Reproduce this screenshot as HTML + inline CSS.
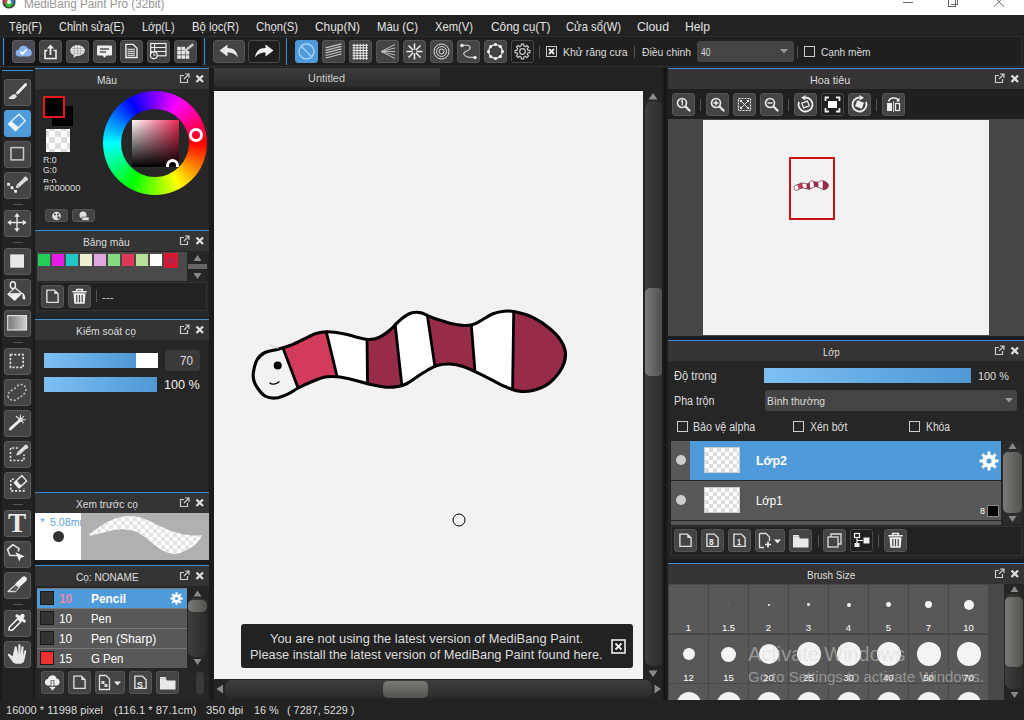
<!DOCTYPE html><html><head><meta charset="utf-8"><title>MediBang Paint Pro</title><style>
*{box-sizing:border-box;margin:0;padding:0}
html,body{width:1024px;height:720px;overflow:hidden;background:#222;font-family:"Liberation Sans",sans-serif;color:#ddd;font-size:12px}
.a{position:absolute}
#root{position:absolute;left:0;top:0;width:1024px;height:720px;overflow:hidden;background:#222}
.t{position:absolute;white-space:pre;line-height:1}
.btn{position:absolute;background:#444;border:1px solid #555;border-radius:3px;width:23px;height:23px}
.btn svg{position:absolute;left:0;top:0}
.tb{position:absolute;background:#454545;border:1px solid #5a5a5a;border-radius:3px;width:27px;height:27px}
.tb svg{position:absolute;left:0;top:0}
.ph{position:absolute;background:#333;border-top:1px solid #3f8fcf;height:21px}
.chk{position:absolute;width:11px;height:11px;border:1px solid #ccc;background:#222}
</style></head><body><div id="root">
<div class="a" style="left:0;top:0;width:1024px;height:15px;background:#fff"></div>
<svg class="a" style="left:2px;top:-5px" width="14" height="14" viewBox="0 0 16 16"><circle cx="8" cy="8" r="7.5" fill="#444"/><circle cx="6" cy="7" r="4" fill="#e33"/><circle cx="10" cy="7" r="4" fill="#3a6fd8"/><circle cx="8" cy="10" r="4" fill="#3b3"/><circle cx="8" cy="8" r="2.2" fill="#fff"/></svg>
<div class="t" style="left:24.00px;top:-2px;font-size:12.5px;color:#969696;transform:scaleX(0.9361);transform-origin:0 0;">MediBang Paint Pro (32bit)</div>
<div class="a" style="left:903px;top:2px;width:10px;height:1px;background:#666"></div>
<div class="a" style="left:948px;top:-6px;width:8px;height:13px;border:1px solid #666"></div><div class="a" style="left:951px;top:-4px;width:7px;height:9px;border-right:1px solid #666;border-bottom:1px solid #666"></div>
<svg class="a" style="left:990px;top:0" width="18" height="10"><path d="M4 -3.300L14 6.700M14 -3.300L4 6.700" stroke="#666" stroke-width="1"/></svg>
<div class="a" style="left:0;top:15px;width:1024px;height:22px;background:#222"></div>
<div class="t" style="left:8.75px;top:20px;font-size:13px;color:#e2e2e2;transform:scaleX(0.8462);transform-origin:0 0;">Tệp(F)</div>
<div class="t" style="left:58.75px;top:20px;font-size:13px;color:#e2e2e2;transform:scaleX(0.8469);transform-origin:0 0;">Chỉnh sửa(E)</div>
<div class="t" style="left:141.75px;top:20px;font-size:13px;color:#e2e2e2;transform:scaleX(0.8360);transform-origin:0 0;">Lớp(L)</div>
<div class="t" style="left:191.75px;top:20px;font-size:13px;color:#e2e2e2;transform:scaleX(0.8674);transform-origin:0 0;">Bộ lọc(R)</div>
<div class="t" style="left:255.50px;top:20px;font-size:13px;color:#e2e2e2;transform:scaleX(0.8674);transform-origin:0 0;">Chọn(S)</div>
<div class="t" style="left:314.50px;top:20px;font-size:13px;color:#e2e2e2;transform:scaleX(0.9160);transform-origin:0 0;">Chụp(N)</div>
<div class="t" style="left:377.00px;top:20px;font-size:13px;color:#e2e2e2;transform:scaleX(0.8732);transform-origin:0 0;">Màu (C)</div>
<div class="t" style="left:435.00px;top:20px;font-size:13px;color:#e2e2e2;transform:scaleX(0.8624);transform-origin:0 0;">Xem(V)</div>
<div class="t" style="left:490.50px;top:20px;font-size:13px;color:#e2e2e2;transform:scaleX(0.9149);transform-origin:0 0;">Công cụ(T)</div>
<div class="t" style="left:566.00px;top:20px;font-size:13px;color:#e2e2e2;transform:scaleX(0.8649);transform-origin:0 0;">Cửa sổ(W)</div>
<div class="t" style="left:637.00px;top:20px;font-size:13px;color:#e2e2e2;transform:scaleX(0.9420);transform-origin:0 0;">Cloud</div>
<div class="t" style="left:685.00px;top:20px;font-size:13px;color:#e2e2e2;transform:scaleX(0.9346);transform-origin:0 0;">Help</div>
<div class="a" style="left:0;top:36px;width:1022px;height:31px;background:#1f1f1f;border-top:1px solid #303030;border-bottom:1px solid #303030;border-right:1px solid #303030"></div>
<div class="a" style="left:2.5px;top:38px;width:1.300px;height:27px;background:#3f8fcf"></div>
<div class="a" style="left:204px;top:38px;width:1.300px;height:27px;background:#3f8fcf"></div>
<div class="a" style="left:286px;top:38px;width:1.300px;height:27px;background:#3f8fcf"></div>
<div class="a" style="left:4.500px;top:37px;width:196px;height:29px;background:#151515"></div>
<div class="btn" style="left:12px;top:40px;width:23px;height:23px;background:#4a4a50;border-color:#5a5a60"><svg width="23" height="23" viewBox="0 0 23 23" style="left:-1px;top:-1px"><path d="M6.5 16.5a3.6 3.6 0 0 1 .4-7.1 4.8 4.8 0 0 1 9.200-.6 3.900 3.900 0 0 1 .6 7.700z" fill="#8ab4f0"/><path d="M8.200 11.600l2.300 2.300 4.200-4.400" stroke="#fff" stroke-width="1.800" fill="none"/></svg></div>
<div class="btn" style="left:39px;top:40px;width:23px;height:23px;"><svg width="23" height="23" viewBox="0 0 23 23" style="left:-1px;top:-1px"><path d="M8.5 10.5H6v8h11v-8h-2.500" stroke="#eee" stroke-width="1.600" fill="none"/><path d="M11.500 15V6.500" stroke="#eee" stroke-width="1.800"/><path d="M7.800 8.600l3.700-4.200 3.700 4.200z" fill="#eee"/></svg></div>
<div class="btn" style="left:66px;top:40px;width:23px;height:23px;"><svg width="23" height="23" viewBox="0 0 23 23" style="left:-1px;top:-1px"><ellipse cx="11.500" cy="10.500" rx="7.300" ry="5.400" fill="#e6e6e6"/><path d="M8 14l-.5 4 4-3z" fill="#e6e6e6"/><path d="M6 8.500h11M5 11h13M6.500 13.500h10M8.500 6v9M11.500 5.500v10M14.500 6v9" stroke="#9a9a9a" stroke-width=".600"/></svg></div>
<div class="btn" style="left:93px;top:40px;width:23px;height:23px;"><svg width="23" height="23" viewBox="0 0 23 23" style="left:-1px;top:-1px"><path d="M5 5.500h13a1 1 0 0 1 1 1v8a1 1 0 0 1-1 1h-4.500l-2 2.200-2-2.200H5a1 1 0 0 1-1-1v-8a1 1 0 0 1 1-1z" fill="#eee"/><path d="M7 9h9M7 12h6" stroke="#555" stroke-width="1.600"/></svg></div>
<div class="btn" style="left:120px;top:40px;width:23px;height:23px;"><svg width="23" height="23" viewBox="0 0 23 23" style="left:-1px;top:-1px"><path d="M5.900 4.400h7.300l3.800 3.800v9.300h-11.100z" fill="none" stroke="#eee" stroke-width="1.400"/><path d="M7.500 9.300h7.500M7.500 11.300h7.500M7.500 13.300h7.500M7.500 15.200h7.500" stroke="#eee" stroke-width="1.100"/></svg></div>
<div class="btn" style="left:147px;top:40px;width:23px;height:23px;"><svg width="23" height="23" viewBox="0 0 23 23" style="left:-1px;top:-1px"><rect x="3.700" y="3.500" width="15.300" height="12.300" fill="none" stroke="#eee" stroke-width="1.200"/><path d="M3.700 7.500h15.300M3.700 11.500h15.300M7.700 3.500v9" stroke="#eee" stroke-width="1"/><circle cx="6.800" cy="15.200" r="3.400" fill="#444" stroke="#eee" stroke-width="1.200"/><path d="M6.800 13.300v2h1.600" stroke="#eee" stroke-width=".900" fill="none"/></svg></div>
<div class="btn" style="left:174px;top:40px;width:23px;height:23px;"><svg width="23" height="23" viewBox="0 0 23 23" style="left:-1px;top:-1px"><path d="M3.200 6.800h3.600v3.600H3.200zM7.400 6.800h3.600v3.600H7.400zM3.200 11h3.600v3.600H3.200zM7.400 11h3.600v3.600H7.400zM11.600 11h3.600v3.600h-3.600zM3.200 15.200h3.600v3.600H3.200zM7.400 15.200h3.600v3.600H7.400zM11.600 15.200h3.600v3.600h-3.600z" fill="#e6e6e6"/><path d="M11.400 10.600L18.500 4.800" stroke="#c8c8c8" stroke-width="2.600" stroke-linecap="round"/></svg></div>
<div class="btn" style="left:213px;top:40px;width:32px;height:23px;"><svg width="32" height="23" viewBox="0 0 32 23" style="left:-1px;top:-1px"><path d="M6.500 10.500l8-6v3.500c6 0 9.500 3 10.500 9.500-2.500-3.500-5.500-5-10.500-5v4z" fill="#e8e8e8"/></svg></div>
<div class="btn" style="left:248px;top:40px;width:32px;height:23px;background:#1f1f1f;border-color:#484848"><svg width="32" height="23" viewBox="0 0 32 23" style="left:-1px;top:-1px"><path d="M25.500 10.500l-8-6v3.500c-6 0-9.500 3-10.500 9.500 2.500-3.500 5.500-5 10.500-5v4z" fill="#f2f2f2"/></svg></div>
<div class="btn" style="left:295px;top:40px;width:23px;height:23px;background:#4f9ad8;border-color:#4f9ad8"><svg width="23" height="23" viewBox="0 0 23 23" style="left:-1px;top:-1px"><circle cx="11.500" cy="11.500" r="7.500" fill="none" stroke="#a8d4f8" stroke-width="1.300"/><path d="M6.200 6.200l10.600 10.600" stroke="#a8d4f8" stroke-width="1.300"/></svg></div>
<div class="btn" style="left:322px;top:40px;width:23px;height:23px;"><svg width="23" height="23" viewBox="0 0 23 23" style="left:-1px;top:-1px"><path d="M3.600 7.900l15.800-4M3.600 10.400l15.800-4M3.600 12.900l15.800-4M3.600 15.500l15.800-4M3.600 18l15.800-4" stroke="#c4c4c4" stroke-width="1.100"/></svg></div>
<div class="btn" style="left:349px;top:40px;width:23px;height:23px;"><svg width="23" height="23" viewBox="0 0 23 23" style="left:-1px;top:-1px"><path d="M3.500 5.300h15.500M3.500 7.900h15.500M3.500 10.500h15.500M3.500 13.100h15.500M3.500 15.700h15.500M3.500 18.300h15.500M5 3.800v16M8.100 3.800v16M11.200 3.800v16M14.300 3.800v16M17.400 3.800v16" stroke="#eee" stroke-width="1"/></svg></div>
<div class="btn" style="left:376px;top:40px;width:23px;height:23px;"><svg width="23" height="23" viewBox="0 0 23 23" style="left:-1px;top:-1px"><path d="M5 11.500L19 4.500M5 11.500L19 8M5 11.500H19M5 11.500L19 15M5 11.500L19 18.500" stroke="#bbb" stroke-width="1"/></svg></div>
<div class="btn" style="left:403px;top:40px;width:23px;height:23px;"><svg width="23" height="23" viewBox="0 0 23 23" style="left:-1px;top:-1px"><path d="M11.500 3.500v16M3.500 11.500h16M5.500 5.500l12 12M17.500 5.500l-12 12" stroke="#eee" stroke-width="1.500"/><circle cx="11.500" cy="11.500" r="2" fill="#444"/></svg></div>
<div class="btn" style="left:430px;top:40px;width:23px;height:23px;"><svg width="23" height="23" viewBox="0 0 23 23" style="left:-1px;top:-1px"><circle cx="11.500" cy="11.500" r="7.500" fill="none" stroke="#ddd" stroke-width="1"/><circle cx="11.500" cy="11.500" r="5" fill="none" stroke="#ddd" stroke-width="1"/><circle cx="11.500" cy="11.500" r="2.500" fill="none" stroke="#ddd" stroke-width="1"/></svg></div>
<div class="btn" style="left:457px;top:40px;width:23px;height:23px;"><svg width="23" height="23" viewBox="0 0 23 23" style="left:-1px;top:-1px"><path d="M5 5.500c5-1 9 0 8 3s-8 3-6 6 5 3 11 3" fill="none" stroke="#ccc" stroke-width="1.200"/><circle cx="5" cy="5.500" r="1.700" fill="#eee"/><circle cx="18" cy="17.500" r="1.700" fill="#eee"/></svg></div>
<div class="btn" style="left:484px;top:40px;width:23px;height:23px;"><svg width="23" height="23" viewBox="0 0 23 23" style="left:-1px;top:-1px"><circle cx="11.500" cy="11.500" r="6.800" fill="none" stroke="#ddd" stroke-width="1.300"/><circle cx="18.5" cy="11.5" r="1.500" fill="#fff"/><circle cx="16.4" cy="16.4" r="1.500" fill="#fff"/><circle cx="11.5" cy="18.5" r="1.500" fill="#fff"/><circle cx="6.6" cy="16.4" r="1.500" fill="#fff"/><circle cx="4.5" cy="11.5" r="1.500" fill="#fff"/><circle cx="6.6" cy="6.6" r="1.500" fill="#fff"/><circle cx="11.5" cy="4.5" r="1.500" fill="#fff"/><circle cx="16.4" cy="6.6" r="1.500" fill="#fff"/></svg></div>
<div class="btn" style="left:511px;top:40px;width:23px;height:23px;background:#1f1f1f;border-color:#484848"><svg width="23" height="23" viewBox="0 0 23 23" style="left:-1px;top:-1px"><polygon points="18.91,10.33 18.91,12.67 16.95,12.81 16.27,14.43 17.57,15.91 15.91,17.57 14.43,16.27 12.81,16.95 12.67,18.91 10.33,18.91 10.19,16.95 8.57,16.27 7.09,17.57 5.43,15.91 6.73,14.43 6.05,12.81 4.09,12.67 4.09,10.33 6.05,10.19 6.73,8.57 5.43,7.09 7.09,5.43 8.57,6.73 10.19,6.05 10.33,4.09 12.67,4.09 12.81,6.05 14.43,6.73 15.91,5.43 17.57,7.09 16.27,8.57 16.95,10.19" fill="none" stroke="#ccc" stroke-width="1.200" stroke-linejoin="round"/><circle cx="11.5" cy="11.5" r="2.8" fill="none" stroke="#ccc" stroke-width="1.200"/></svg></div>
<div class="a" style="left:539px;top:46px;width:1px;height:12px;background:#555"></div>
<div class="a" style="left:634px;top:46px;width:1px;height:12px;background:#555"></div>
<div class="a" style="left:797px;top:46px;width:1px;height:12px;background:#555"></div>
<div class="chk" style="left:546px;top:46px"><svg class="a" style="left:0;top:0" width="9" height="9"><path d="M2 2l5 5M7 2l-5 5" stroke="#eee" stroke-width="1.800"/></svg></div>
<div class="t" style="left:562.50px;top:47px;font-size:11.5px;color:#ddd;transform:scaleX(0.9081);transform-origin:0 0;">Khử răng cưa</div>
<div class="t" style="left:642.00px;top:47px;font-size:11.5px;color:#ddd;transform:scaleX(0.9017);transform-origin:0 0;">Điều chinh</div>
<div class="a" style="left:697px;top:41px;width:97px;height:21px;background:#444;border-radius:3px"></div>
<div class="t" style="left:700.50px;top:48px;font-size:10px;color:#ddd;transform:scaleX(0.8539);transform-origin:0 0;">40</div>
<svg class="a" style="left:780px;top:49px" width="8" height="5"><path d="M0 0h8l-4 4.500z" fill="#999"/></svg>
<div class="chk" style="left:804px;top:46px"></div>
<div class="t" style="left:820.50px;top:47px;font-size:11.5px;color:#ddd;transform:scaleX(0.8800);transform-origin:0 0;">Cạnh mềm</div>
<div class="a" style="left:0;top:68px;width:35px;height:632px;background:#1a1a1a"></div>
<div class="a" style="left:2px;top:70px;width:31px;height:630px;background:#232323;border-top:1px solid #3f8fcf"></div>
<div class="tb" style="left:4px;top:79px;width:27px;height:27px;"><svg width="27" height="27" viewBox="0 0 27 27" style="left:-1px;top:-1px"><path d="M21.700 5.500L13.500 14" stroke="#eee" stroke-width="2.700" stroke-linecap="round"/><path d="M4 19c2.500-.600 3.500-3.600 6.500-4 1.500.400 2.300 1.300 2.300 2.500-1.200 3-5.500 3.600-8.800 1.500z" fill="#e0e0e0"/></svg></div>
<div class="tb" style="left:4px;top:110px;width:27px;height:27px;background:#4f9ad8;border-color:#4f9ad8"><svg width="27" height="27" viewBox="0 0 27 27" style="left:-1px;top:-1px"><path d="M4.400 14L15.100 4.200l6.200 6.600L11.500 20.600z" fill="none" stroke="#d4e8fb" stroke-width="1.600" stroke-linejoin="round"/><path d="M4.400 14l3.100-2.700 7.400 6.300-3.400 3z" fill="#f0f6ff"/></svg></div>
<div class="tb" style="left:4px;top:141px;width:27px;height:27px;"><svg width="27" height="27" viewBox="0 0 27 27" style="left:-1px;top:-1px"><rect x="7" y="6.600" width="12.500" height="12.300" fill="none" stroke="#c8c8c8" stroke-width="1.500"/></svg></div>
<div class="tb" style="left:4px;top:172px;width:27px;height:27px;"><svg width="27" height="27" viewBox="0 0 27 27" style="left:-1px;top:-1px"><path d="M14 14l7.200-6.600" stroke="#ddd" stroke-width="3.600"/><path d="M21.300 6.300l1 1" stroke="#ddd" stroke-width="3.400" stroke-linecap="round"/><path d="M11.700 16.200l1-3.400 2.700 2.600z" fill="#ddd"/><path d="M4.400 12.200l3.600 3.500 3.500 3.600" stroke="#aaa" stroke-width=".800" fill="none"/><rect x="3.100" y="10.900" width="2.700" height="2.700" fill="#eee"/><rect x="6.700" y="14.400" width="2.700" height="2.700" fill="#eee"/><rect x="10.200" y="18" width="2.700" height="2.700" fill="#eee"/></svg></div>
<div class="tb" style="left:4px;top:210px;width:27px;height:27px;"><svg width="27" height="27" viewBox="0 0 27 27" style="left:-1px;top:-1px"><path d="M13 4.500v16M4.500 12.500h17" stroke="#e8e8e8" stroke-width="1.400"/><path d="M13 3l2.800 3.800h-5.600zM13 22l2.800-3.800h-5.600zM3.300 12.500l3.800-2.800v5.600zM22.700 12.500l-3.800-2.800v5.600z" fill="#e8e8e8"/></svg></div>
<div class="tb" style="left:4px;top:248px;width:27px;height:27px;"><svg width="27" height="27" viewBox="0 0 27 27" style="left:-1px;top:-1px"><rect x="6.200" y="6.400" width="13.800" height="13.300" fill="#e8e8e8"/></svg></div>
<div class="tb" style="left:4px;top:279px;width:27px;height:27px;"><svg width="27" height="27" viewBox="0 0 27 27" style="left:-1px;top:-1px"><ellipse cx="8.900" cy="6.200" rx="2.600" ry="3.400" fill="none" stroke="#eee" stroke-width="1.400"/><path d="M3.100 15.200L11.100 8.100l7.500 6.200-7.900 7.600z" fill="#eee"/><path d="M5.500 14.300l5.600-4.800 5.300 4.500z" fill="#555"/><path d="M18.200 13.500c2.200 1.200 3.300 3.600 3 6.800-1.600.700-3-.300-2.600-2.300z" fill="#eee"/></svg></div>
<div class="tb" style="left:4px;top:310px;width:27px;height:27px;"><svg width="27" height="27" viewBox="0 0 27 27" style="left:-1px;top:-1px"><defs><linearGradient id="gg" x1="0" y1="0" x2="1" y2="0"><stop offset="0" stop-color="#777"/><stop offset="1" stop-color="#d0d0d0"/></linearGradient></defs><rect x="3.700" y="5.600" width="18.800" height="14.400" fill="url(#gg)" stroke="#ddd" stroke-width="1.200"/></svg></div>
<div class="tb" style="left:4px;top:348px;width:27px;height:27px;"><svg width="27" height="27" viewBox="0 0 27 27" style="left:-1px;top:-1px"><rect x="6.400" y="6.600" width="12.800" height="12.800" fill="none" stroke="#ddd" stroke-width="1.600" stroke-dasharray="2.200 1.600"/></svg></div>
<div class="tb" style="left:4px;top:379px;width:27px;height:27px;"><svg width="27" height="27" viewBox="0 0 27 27" style="left:-1px;top:-1px"><path d="M4.500 18.500c-2-3 .500-6 4-7.500s5-6 9-5.500 5.500 4.500 3.500 8-4.500 4-7.500 6.500-7 1.500-9-1.500z" fill="none" stroke="#bbb" stroke-width="1.500" stroke-dasharray="2.200 1.700"/></svg></div>
<div class="tb" style="left:4px;top:410px;width:27px;height:27px;"><svg width="27" height="27" viewBox="0 0 27 27" style="left:-1px;top:-1px"><path d="M6.300 19L14.600 11.500" stroke="#eee" stroke-width="3" stroke-linecap="round"/><circle cx="16.400" cy="9.800" r="2.200" fill="#eee"/><path d="M16.400 9.800L12 6.200M16.400 9.800V4.700M16.400 9.800l3.500-3.600M16.400 9.800h5.300M16.400 9.800l3.300 3.400" stroke="#ddd" stroke-width="1.100"/></svg></div>
<div class="tb" style="left:4px;top:441px;width:27px;height:27px;"><svg width="27" height="27" viewBox="0 0 27 27" style="left:-1px;top:-1px"><path d="M14 7H6.500v12.500h13.500v-6" fill="none" stroke="#ddd" stroke-width="1.600" stroke-dasharray="2.200 1.600"/><path d="M14.500 12.500l7-6.500" stroke="#ddd" stroke-width="3.600"/><path d="M21.800 5.200l.800.800" stroke="#ddd" stroke-width="3.400" stroke-linecap="round"/><path d="M12.200 14.600l1-3.300 2.600 2.500z" fill="#ddd"/></svg></div>
<div class="tb" style="left:4px;top:472px;width:27px;height:27px;"><svg width="27" height="27" viewBox="0 0 27 27" style="left:-1px;top:-1px"><path d="M10 7.300H6.800v11.600h13.200v-3" fill="none" stroke="#ddd" stroke-width="1.600" stroke-dasharray="2.200 1.600"/><path d="M10.200 10.700L17.800 3.500l4.800 5.400L15.100 16z" fill="none" stroke="#eee" stroke-width="1.400" stroke-linejoin="round"/><path d="M10.200 10.700l2.300-2.200 5 5.300-2.400 2.200z" fill="#eee"/></svg></div>
<div class="tb" style="left:4px;top:541px;width:27px;height:27px;"><svg width="27" height="27" viewBox="0 0 27 27" style="left:-1px;top:-1px"><path d="M14 14.500l-8.200-.200L3.500 8.500l5.400-4.900 6.200 4-1 3" fill="none" stroke="#ddd" stroke-width="1.700" stroke-linejoin="round"/><path d="M11.500 11.200l9.300 4.200-3.900 1.300-1.600 3.800z" fill="#eee"/></svg></div>
<div class="tb" style="left:4px;top:572px;width:27px;height:27px;"><svg width="27" height="27" viewBox="0 0 27 27" style="left:-1px;top:-1px"><path d="M14.500 12.200L20 7.200" stroke="#eee" stroke-width="5.600" stroke-linecap="round"/><path d="M4 19.500L12.400 12l2.900 3.100-4 4.400z" fill="none" stroke="#ddd" stroke-width="1.300" stroke-linejoin="round"/><path d="M11 13.500l3 3-2.500 2.800h-2z" fill="#666"/></svg></div>
<div class="tb" style="left:4px;top:610px;width:27px;height:27px;"><svg width="27" height="27" viewBox="0 0 27 27" style="left:-1px;top:-1px"><path d="M5 20l.300-2.800 8.800-8.800 3 3-8.800 8.800z" fill="none" stroke="#eee" stroke-width="1.600" stroke-linejoin="round"/><path d="M12.900 5.800l7.500 5.300" stroke="#eee" stroke-width="3" stroke-linecap="round"/><path d="M16 9l2.500-3" stroke="#eee" stroke-width="4.400" stroke-linecap="round"/></svg></div>
<div class="tb" style="left:4px;top:641px;width:27px;height:27px;"><svg width="27" height="27" viewBox="0 0 27 27" style="left:-1px;top:-1px"><path d="M8.500 15.500l-2.800-2.400c-1.200-.900-2.500.300-1.600 1.500l4.700 6.400c.900 1.200 2 1.700 3.500 1.700h4.200c2.200 0 3.500-1.500 3.900-3.600l1.800-8.600c.300-1.300-1.500-1.700-1.900-.400l-1.300 4.300.600-8c.100-1.400-1.900-1.500-2.100-.100l-.900 7.200-.100-9.200c0-1.400-2.100-1.400-2.100 0l-.200 9-1.500-7.200c-.300-1.400-2.300-1-2 .400z" fill="#e8e8e8"/></svg></div>
<div class="tb" style="left:4px;top:510px"></div>
<div class="t" style="left:8.00px;top:510px;font-size:27px;color:#e8e8e8;font-weight:bold;font-family:'Liberation Serif',serif;transform:scaleX(1.0102);transform-origin:0 0;">T</div>
<div class="a" style="left:13px;top:204px;width:10px;height:1px;background:#555"></div>
<div class="a" style="left:13px;top:242px;width:10px;height:1px;background:#555"></div>
<div class="a" style="left:13px;top:342px;width:10px;height:1px;background:#555"></div>
<div class="a" style="left:13px;top:504px;width:10px;height:1px;background:#555"></div>
<div class="a" style="left:13px;top:604px;width:10px;height:1px;background:#555"></div>
<div class="a" style="left:35px;top:68px;width:174px;height:632px;background:#262626"></div>
<div class="a" style="left:209px;top:68px;width:5px;height:632px;background:#1b1b1b"></div>
<div class="ph" style="left:35px;top:68px;width:174px;background:#343434"></div>
<div class="t" style="left:96.50px;top:75px;font-size:11.5px;color:#ddd;transform:scaleX(0.8849);transform-origin:0 0;">Màu</div>
<svg class="a" style="left:178.5px;top:73px" width="11" height="11"><path d="M5 2.500H1.500v7h7V6" fill="none" stroke="#ccc" stroke-width="1.200"/><path d="M5 6l4.500-4.500M6 1h4v4" fill="none" stroke="#ccc" stroke-width="1.200"/></svg>
<svg class="a" style="left:195px;top:73.5px" width="10" height="10"><path d="M1.500 1.500l6.500 6.500M8 1.500l-6.500 6.500" stroke="#ddd" stroke-width="2.300"/></svg>
<div class="a" style="left:52px;top:106px;width:21px;height:20px;background:#000"></div>
<div class="a" style="left:43px;top:96px;width:22px;height:22px;background:#000;border:2px solid #e8191c"></div>
<div class="a" style="left:46px;top:129px;width:24px;height:23px;background:#fff;background-image:conic-gradient(#ddd 25%,#fff 0 50%,#ddd 0 75%,#fff 0);background-size:12px 12px;background-position:3px 2px"></div>
<div class="t" style="left:43.30px;top:155px;font-size:9.5px;color:#ddd;transform:scaleX(0.9259);transform-origin:0 0;">R:0</div>
<div class="t" style="left:43.30px;top:165px;font-size:9.5px;color:#ddd;transform:scaleX(0.8947);transform-origin:0 0;">G:0</div>
<div class="a" style="left:43px;top:177px;width:30px;height:6px;overflow:hidden">
<div class="t" style="left:0.30px;top:0px;font-size:9.5px;color:#ddd;transform:scaleX(0.9604);transform-origin:0 0;">B:0</div>
</div>
<div class="t" style="left:43.50px;top:183px;font-size:9.5px;color:#ddd;transform:scaleX(0.9869);transform-origin:0 0;">#000000</div>
<div class="a" style="left:103px;top:91px;width:104px;height:104px;border-radius:50%;background:conic-gradient(from 90deg,#ff0000,#ff8000 30deg,#ffff00 60deg,#80ff00 90deg,#00ff00 120deg,#00ff80 150deg,#00ffff 180deg,#0080ff 210deg,#0000ff 240deg,#8000ff 270deg,#ff00ff 300deg,#ff0080 330deg,#ff0000)"></div>
<div class="a" style="left:121px;top:109px;width:68px;height:68px;border-radius:50%;background:#262626"></div>
<div class="a" style="left:132px;top:120px;width:47px;height:47px;background:linear-gradient(to bottom,rgba(0,0,0,0),#000),linear-gradient(to right,#fff,#ee2853)"></div>
<div class="a" style="left:188.500px;top:127.500px;width:14px;height:14px;border-radius:50%;border:3px solid #fff"></div>
<div class="a" style="left:166px;top:159px;width:13px;height:8px;overflow:hidden"><div class="a" style="left:0;top:0;width:13px;height:13px;border-radius:50%;border:3px solid #fff;background:#000"></div></div>
<div class="a" style="left:45px;top:209px;width:23px;height:13px;background:#444;border:1px solid #555;border-radius:3px"></div>
<div class="a" style="left:72px;top:209px;width:23px;height:13px;background:#444;border:1px solid #555;border-radius:3px"></div>
<svg class="a" style="left:51px;top:211px" width="11" height="10"><circle cx="5.500" cy="5" r="4.300" fill="#ddd"/><circle cx="4" cy="3.500" r="1" fill="#444"/><circle cx="7" cy="3.500" r="1" fill="#444"/><circle cx="7.500" cy="6.500" r="1.200" fill="#444"/></svg>
<svg class="a" style="left:78px;top:211px" width="12" height="10"><circle cx="5" cy="4" r="3.500" fill="#ddd"/><rect x="4" y="6" width="7" height="3.500" fill="#ddd" stroke="#444" stroke-width=".600"/></svg>
<div class="ph" style="left:35px;top:230px;width:174px;background:#343434"></div>
<div class="t" style="left:83.30px;top:237px;font-size:11.5px;color:#ddd;transform:scaleX(0.8906);transform-origin:0 0;">Bảng màu</div>
<svg class="a" style="left:178.5px;top:235px" width="11" height="11"><path d="M5 2.500H1.500v7h7V6" fill="none" stroke="#ccc" stroke-width="1.200"/><path d="M5 6l4.500-4.500M6 1h4v4" fill="none" stroke="#ccc" stroke-width="1.200"/></svg>
<svg class="a" style="left:195px;top:235.5px" width="10" height="10"><path d="M1.500 1.500l6.500 6.500M8 1.500l-6.500 6.500" stroke="#ddd" stroke-width="2.300"/></svg>
<div class="a" style="left:37px;top:252px;width:150px;height:29px;background:#4a4a4a"></div>
<div class="a" style="left:38px;top:254px;width:12px;height:12px;background:#22cc55"></div>
<div class="a" style="left:52px;top:254px;width:12px;height:12px;background:#e81ce8"></div>
<div class="a" style="left:66px;top:254px;width:12px;height:12px;background:#22c8c8"></div>
<div class="a" style="left:80px;top:254px;width:12px;height:12px;background:#f0f0d0"></div>
<div class="a" style="left:94px;top:254px;width:12px;height:12px;background:#e0a8e0"></div>
<div class="a" style="left:108px;top:254px;width:12px;height:12px;background:#88dc80"></div>
<div class="a" style="left:122px;top:254px;width:12px;height:12px;background:#e03858"></div>
<div class="a" style="left:136px;top:254px;width:12px;height:12px;background:#b8e098"></div>
<div class="a" style="left:150px;top:254px;width:12px;height:12px;background:#ffffff"></div>
<div class="a" style="left:164px;top:254px;width:12px;height:12px;background:#d81830"></div>
<div class="a" style="left:163.500px;top:253px;width:14.500px;height:14.500px;background:#d81830"></div><div class="a" style="left:167.500px;top:257px;width:6.500px;height:6.500px;border-radius:50%;background:#a82848"></div>
<svg class="a" style="left:188px;top:253px" width="19" height="28"><path d="M9.500 2l4 6h-8zM9.500 26l4-6h-8z" fill="#888"/><rect x="0" y="11" width="19" height="5" fill="#666"/></svg>
<div class="a" style="left:37px;top:282px;width:170px;height:29px;border:1px solid #333;background:#222"></div>
<div class="btn" style="left:41px;top:285px;width:23px;height:23px;"><svg width="23" height="23" viewBox="0 0 23 23" style="left:-1px;top:-1px"><path d="M5.900 5.100h7.400l3.800 3.800v8.500h-11.200z" fill="none" stroke="#ddd" stroke-width="1.400"/><path d="M13.300 5.100v3.800h3.800z" fill="#ddd"/></svg></div>
<div class="btn" style="left:68px;top:285px;width:23px;height:23px;"><svg width="23" height="23" viewBox="0 0 23 23" style="left:-1px;top:-1px"><path d="M4.300 6.700h14.400M8.700 6V4.500h5.600V6" stroke="#eee" stroke-width="1.600" fill="none"/><path d="M5.500 8.300h12l-.8 10.500h-10.400z" fill="#eee"/><path d="M8.800 10v7.300M11.500 10v7.300M14.200 10v7.300" stroke="#444" stroke-width="1.200"/></svg></div>
<div class="a" style="left:96px;top:290px;width:1px;height:12px;background:#555"></div>
<div class="t" style="left:102.00px;top:292px;font-size:11px;color:#ccc;transform:scaleX(1.0636);transform-origin:0 0;">---</div>
<div class="ph" style="left:35px;top:319px;width:174px;background:#343434"></div>
<div class="t" style="left:76.30px;top:326px;font-size:11.5px;color:#ddd;transform:scaleX(0.9025);transform-origin:0 0;">Kiểm soát cọ</div>
<svg class="a" style="left:178.5px;top:324px" width="11" height="11"><path d="M5 2.500H1.500v7h7V6" fill="none" stroke="#ccc" stroke-width="1.200"/><path d="M5 6l4.500-4.500M6 1h4v4" fill="none" stroke="#ccc" stroke-width="1.200"/></svg>
<svg class="a" style="left:195px;top:324.5px" width="10" height="10"><path d="M1.500 1.500l6.500 6.500M8 1.500l-6.500 6.500" stroke="#ddd" stroke-width="2.300"/></svg>
<div class="a" style="left:44px;top:353px;width:114px;height:15px;background:#fff"></div>
<div class="a" style="left:44px;top:353px;width:92px;height:15px;background:linear-gradient(to right,#7cc0f4,#4f98d4)"></div>
<div class="a" style="left:165px;top:350px;width:35px;height:21px;background:#3a3a3a;border-radius:3px"></div>
<div class="t" style="left:179.50px;top:355px;font-size:12.5px;color:#ddd;transform:scaleX(0.9348);transform-origin:0 0;">70</div>
<div class="a" style="left:44px;top:377px;width:113px;height:15px;background:linear-gradient(to right,#7cc0f4,#4f98d4)"></div>
<div class="t" style="left:163.70px;top:379px;font-size:12.5px;color:#eee;transform:scaleX(1.0098);transform-origin:0 0;">100 %</div>
<div class="ph" style="left:35px;top:492px;width:174px;background:#343434"></div>
<div class="t" style="left:75.50px;top:499px;font-size:11.5px;color:#ddd;transform:scaleX(0.8832);transform-origin:0 0;">Xem trước cọ</div>
<svg class="a" style="left:178.5px;top:497px" width="11" height="11"><path d="M5 2.500H1.500v7h7V6" fill="none" stroke="#ccc" stroke-width="1.200"/><path d="M5 6l4.500-4.500M6 1h4v4" fill="none" stroke="#ccc" stroke-width="1.200"/></svg>
<svg class="a" style="left:195px;top:497.5px" width="10" height="10"><path d="M1.500 1.500l6.500 6.500M8 1.500l-6.500 6.500" stroke="#ddd" stroke-width="2.300"/></svg>
<div class="a" style="left:35px;top:513px;width:174px;height:47px;background:#b0b0b0"></div>
<div class="a" style="left:35px;top:513px;width:46px;height:47px;background:#fff;overflow:hidden">
<div class="t" style="left:5.00px;top:4px;font-size:11px;color:#5a9fd8;transform:scaleX(1.1212);transform-origin:0 0;">*</div>
<div class="t" style="left:14.70px;top:4px;font-size:11px;color:#5a9fd8;transform:scaleX(0.9635);transform-origin:0 0;">5.08mm</div>
<div class="a" style="left:18px;top:18px;width:11px;height:11px;border-radius:50%;background:#333"></div></div>
<svg class="a" style="left:81px;top:513px" width="128" height="47"><defs><pattern id="ck" width="8" height="8" patternUnits="userSpaceOnUse"><rect width="8" height="8" fill="#fff"/><rect width="4" height="4" fill="#e4e4e4"/><rect x="4" y="4" width="4" height="4" fill="#e4e4e4"/></pattern></defs><path d="M8.1 22.1C8.5 20.6 18.5 13.6 23.2 10.7C27.9 7.8 31.9 6.2 36.3 4.9C40.7 3.6 45.0 2.8 49.4 2.9C53.8 3.0 58.0 4.1 62.4 5.5C66.8 6.9 71.1 9.4 75.5 11.4C79.9 13.4 84.2 15.7 88.6 17.3C93.0 18.9 97.3 20.3 101.7 21.2C106.1 22.1 111.6 22.3 114.8 22.5C118.0 22.7 120.7 21.1 120.7 22.5C120.7 23.9 117.3 28.6 114.8 31.0C112.3 33.4 108.9 35.3 105.6 36.9C102.3 38.5 98.5 40.4 95.2 40.8C91.9 41.2 89.3 40.7 86.0 39.5C82.7 38.3 79.0 36.0 75.5 33.6C72.0 31.2 68.6 27.6 65.1 25.1C61.6 22.6 58.1 20.1 54.6 18.6C51.1 17.2 47.6 16.7 44.1 16.4C40.6 16.1 37.5 16.3 33.6 16.9C29.7 17.5 24.9 19.0 20.6 19.9C16.4 20.8 7.7 23.6 8.1 22.1z" fill="url(#ck)"/></svg>
<div class="a" style="left:35px;top:560px;width:174px;height:5px;background:#1c1c1c"></div>
<div class="ph" style="left:35px;top:565px;width:174px;background:#343434"></div>
<div class="t" style="left:75.70px;top:572px;font-size:11.5px;color:#ddd;transform:scaleX(0.8746);transform-origin:0 0;">Cọ: NONAME</div>
<svg class="a" style="left:178.5px;top:570px" width="11" height="11"><path d="M5 2.500H1.500v7h7V6" fill="none" stroke="#ccc" stroke-width="1.200"/><path d="M5 6l4.500-4.500M6 1h4v4" fill="none" stroke="#ccc" stroke-width="1.200"/></svg>
<svg class="a" style="left:195px;top:570.5px" width="10" height="10"><path d="M1.500 1.500l6.500 6.500M8 1.500l-6.500 6.500" stroke="#ddd" stroke-width="2.300"/></svg>
<div class="a" style="left:37px;top:588px;width:150px;height:80px;background:#777"></div>
<div class="a" style="left:37px;top:589px;width:150px;height:19px;background:#4f9ad8"></div>
<div class="a" style="left:40px;top:591px;width:14px;height:14px;background:#333;border:1px solid #1a1a1a"></div>
<div class="t" style="left:59.30px;top:593px;font-size:12.5px;color:#e888a8;font-weight:bold;transform:scaleX(0.9492);transform-origin:0 0;">10</div>
<div class="t" style="left:91.30px;top:593px;font-size:12.5px;color:#fff;font-weight:bold;transform:scaleX(0.9504);transform-origin:0 0;">Pencil</div>
<div class="a" style="left:37px;top:609px;width:150px;height:19px;background:#585858"></div>
<div class="a" style="left:40px;top:611px;width:14px;height:14px;background:#333;border:1px solid #1a1a1a"></div>
<div class="t" style="left:59.30px;top:613px;font-size:12.5px;color:#fff;transform:scaleX(0.9492);transform-origin:0 0;">10</div>
<div class="t" style="left:91.30px;top:613px;font-size:12.5px;color:#fff;transform:scaleX(0.9079);transform-origin:0 0;">Pen</div>
<div class="a" style="left:37px;top:629px;width:150px;height:19px;background:#585858"></div>
<div class="a" style="left:40px;top:631px;width:14px;height:14px;background:#333;border:1px solid #1a1a1a"></div>
<div class="t" style="left:59.30px;top:633px;font-size:12.5px;color:#fff;transform:scaleX(0.9492);transform-origin:0 0;">10</div>
<div class="t" style="left:91.30px;top:633px;font-size:12.5px;color:#fff;transform:scaleX(0.9702);transform-origin:0 0;">Pen (Sharp)</div>
<div class="a" style="left:37px;top:649px;width:150px;height:19px;background:#585858"></div>
<div class="a" style="left:40px;top:651px;width:14px;height:14px;background:#f03030;border:1px solid #1a1a1a"></div>
<div class="t" style="left:59.30px;top:653px;font-size:12.5px;color:#fff;transform:scaleX(0.9492);transform-origin:0 0;">15</div>
<div class="t" style="left:91.30px;top:653px;font-size:12.5px;color:#fff;transform:scaleX(0.9143);transform-origin:0 0;">G Pen</div>
<svg class="a" style="left:170px;top:592px" width="13" height="13" viewBox="0 0 13 13"><polygon points="12.72,5.51 12.72,7.49 10.68,7.50 10.17,8.75 11.60,10.20 10.20,11.60 8.75,10.17 7.50,10.68 7.49,12.72 5.51,12.72 5.50,10.68 4.25,10.17 2.80,11.60 1.40,10.20 2.83,8.75 2.32,7.50 0.28,7.49 0.28,5.51 2.32,5.50 2.83,4.25 1.40,2.80 2.80,1.40 4.25,2.83 5.50,2.32 5.51,0.28 7.49,0.28 7.50,2.32 8.75,2.83 10.20,1.40 11.60,2.80 10.17,4.25 10.68,5.50" fill="#fff"/><circle cx="6.5" cy="6.5" r="1.6" fill="#4f9ad8"/></svg>
<div class="a" style="left:188px;top:588px;width:19px;height:80px;background:#262524"></div>
<div class="a" style="left:188px;top:598px;width:19px;height:59px;background:linear-gradient(to right,#403e3c,#2c2b2a);border-radius:7px"></div>
<div class="a" style="left:188px;top:599.500px;width:19px;height:12.500px;background:linear-gradient(to right,#7c7a78,#54524f);border-radius:5px"></div>
<svg class="a" style="left:188px;top:588px" width="19" height="80"><path d="M9.500 2.500l4 6h-8zM9.500 77l4-6h-8z" fill="#8a8a8a"/></svg>
<div class="btn" style="left:41px;top:671px;width:23px;height:23px;"><svg width="23" height="23" viewBox="0 0 23 23" style="left:-1px;top:-1px"><path d="M6.500 14.500a3.300 3.300 0 0 1 .4-6.500 4.500 4.500 0 0 1 8.700-.500 3.600 3.600 0 0 1 .5 7z" fill="#eee"/><path d="M11.500 9v6" stroke="#444" stroke-width="3.600"/><path d="M11.500 9.500v7" stroke="#eee" stroke-width="2"/><path d="M7.500 15.500h8l-4 4.500z" fill="#eee" stroke="#444" stroke-width=".800"/></svg></div>
<div class="btn" style="left:68px;top:671px;width:23px;height:23px;"><svg width="23" height="23" viewBox="0 0 23 23" style="left:-1px;top:-1px"><path d="M5.900 5.100h7.400l3.800 3.800v8.500h-11.200z" fill="none" stroke="#ddd" stroke-width="1.400"/><path d="M13.300 5.100v3.800h3.800z" fill="#ddd"/></svg></div>
<div class="btn" style="left:95px;top:671px;width:30px;height:23px;"><svg width="30" height="23" viewBox="0 0 30 23" style="left:-1px;top:-1px"><path d="M4.500 4.500h6.500l3.500 3.500v10.500h-10z" fill="none" stroke="#ddd" stroke-width="1.300"/><rect x="6.500" y="10" width="3" height="3" fill="#ddd"/><rect x="9.500" y="13" width="3" height="3" fill="#ddd"/><path d="M19 10.500h7l-3.500 4z" fill="#eee"/></svg></div>
<div class="btn" style="left:129px;top:671px;width:23px;height:23px;"><svg width="23" height="23" viewBox="0 0 23 23" style="left:-1px;top:-1px"><path d="M5.900 5.100h7.400l3.800 3.800v8.500h-11.200z" fill="none" stroke="#ddd" stroke-width="1.400"/></svg></div>
<div class="btn" style="left:156px;top:671px;width:23px;height:23px;"><svg width="23" height="23" viewBox="0 0 23 23" style="left:-1px;top:-1px"><path d="M4 7.500h5.500l1.500 2h8.500v9H4z" fill="#e8e8e8"/><path d="M4 6h5.500l1.500 1.500H4z" fill="#e8e8e8"/></svg></div>
<div class="t" style="left:137.30px;top:680px;font-size:9.5px;color:#eee;font-weight:bold;transform:scaleX(0.9458);transform-origin:0 0;">S</div>
<div class="a" style="left:196px;top:672px;width:8px;height:22px;background:#3a3a3a;border-radius:3px"></div>
<div class="a" style="left:214px;top:68px;width:448px;height:632px;background:#222"></div>
<div class="a" style="left:213.500px;top:68px;width:226px;height:19px;background:linear-gradient(#3c3c3c,#2b2b2b);border-radius:2px"></div>
<div class="a" style="left:214px;top:89.500px;width:448px;height:1.500px;background:#161616"></div>
<div class="t" style="left:307.50px;top:73px;font-size:11.5px;color:#ccc;transform:scaleX(0.9487);transform-origin:0 0;">Untitled</div>
<div class="a" style="left:214px;top:91px;width:429px;height:588px;background:#f2f2f2"></div>
<svg class="a" style="left:214px;top:91px" width="429" height="587" viewBox="214 91 429 587"><defs><clipPath id="wc"><path d="M253.3 373.0C253.8 369.5 255.1 363.4 257.0 360.0C258.9 356.6 261.7 354.2 265.0 352.5C268.3 350.8 272.8 350.7 277.0 349.5C281.2 348.3 285.6 347.2 290.0 345.5C294.4 343.8 298.8 341.5 303.1 339.5C307.4 337.5 311.9 334.8 316.0 333.5C320.1 332.2 323.2 331.7 328.0 331.8C332.8 331.9 339.6 333.1 344.6 334.0C349.6 334.9 353.9 336.6 358.0 337.5C362.1 338.4 365.5 339.5 369.0 339.5C372.5 339.5 375.6 339.0 379.0 337.5C382.4 336.0 386.4 332.9 389.4 330.5C392.4 328.1 394.5 325.3 397.0 323.0C399.5 320.7 401.9 318.3 404.4 316.6C406.9 314.9 409.2 313.4 412.0 312.8C414.8 312.2 417.7 312.0 421.0 312.8C424.3 313.6 427.2 315.8 432.0 317.5C436.8 319.2 444.5 321.9 449.8 323.2C455.1 324.5 460.1 325.3 464.0 325.5C467.9 325.7 470.0 325.4 473.0 324.5C476.0 323.6 478.7 321.8 482.0 320.0C485.3 318.2 489.3 315.3 493.0 313.8C496.7 312.3 500.3 311.5 504.0 311.2C507.7 310.9 510.2 310.8 515.0 311.8C519.8 312.8 527.1 314.7 532.8 317.4C538.5 320.1 544.7 324.3 549.4 328.2C554.1 332.1 558.3 336.4 561.0 340.7C563.7 345.0 565.4 349.4 565.5 354.0C565.6 358.6 564.6 363.2 561.9 368.0C559.2 372.8 554.2 379.2 549.4 383.0C544.5 386.8 538.0 389.2 532.8 390.5C527.6 391.8 522.6 391.7 518.0 391.0C513.4 390.3 509.4 388.4 505.0 386.5C500.6 384.6 496.3 382.2 491.3 379.7C486.3 377.2 479.7 373.9 475.0 371.7C470.3 369.5 467.3 367.7 463.1 366.4C458.9 365.1 454.2 364.1 449.8 364.0C445.4 363.9 440.8 364.4 437.0 365.5C433.2 366.6 430.4 368.6 427.0 370.5C423.6 372.4 419.9 375.0 416.6 377.2C413.3 379.4 410.1 381.9 407.0 383.5C403.9 385.1 401.5 385.9 398.0 386.5C394.5 387.1 391.2 387.6 386.1 387.2C381.0 386.8 373.0 385.1 367.5 383.8C362.0 382.6 358.0 380.9 352.9 379.7C347.8 378.5 341.8 377.2 337.1 376.8C332.5 376.4 329.4 376.1 325.0 377.0C320.6 377.9 315.5 380.2 311.0 382.0C306.5 383.8 301.9 386.0 298.1 388.0C294.3 390.0 291.9 392.1 288.2 393.8C284.5 395.5 279.9 397.6 276.0 398.0C272.1 398.4 268.1 397.7 265.0 396.0C261.9 394.3 259.3 390.5 257.5 388.0C255.7 385.5 254.7 383.5 254.0 381.0C253.3 378.5 252.8 376.5 253.3 373.0z"/></clipPath></defs><path d="M253.3 373.0C253.8 369.5 255.1 363.4 257.0 360.0C258.9 356.6 261.7 354.2 265.0 352.5C268.3 350.8 272.8 350.7 277.0 349.5C281.2 348.3 285.6 347.2 290.0 345.5C294.4 343.8 298.8 341.5 303.1 339.5C307.4 337.5 311.9 334.8 316.0 333.5C320.1 332.2 323.2 331.7 328.0 331.8C332.8 331.9 339.6 333.1 344.6 334.0C349.6 334.9 353.9 336.6 358.0 337.5C362.1 338.4 365.5 339.5 369.0 339.5C372.5 339.5 375.6 339.0 379.0 337.5C382.4 336.0 386.4 332.9 389.4 330.5C392.4 328.1 394.5 325.3 397.0 323.0C399.5 320.7 401.9 318.3 404.4 316.6C406.9 314.9 409.2 313.4 412.0 312.8C414.8 312.2 417.7 312.0 421.0 312.8C424.3 313.6 427.2 315.8 432.0 317.5C436.8 319.2 444.5 321.9 449.8 323.2C455.1 324.5 460.1 325.3 464.0 325.5C467.9 325.7 470.0 325.4 473.0 324.5C476.0 323.6 478.7 321.8 482.0 320.0C485.3 318.2 489.3 315.3 493.0 313.8C496.7 312.3 500.3 311.5 504.0 311.2C507.7 310.9 510.2 310.8 515.0 311.8C519.8 312.8 527.1 314.7 532.8 317.4C538.5 320.1 544.7 324.3 549.4 328.2C554.1 332.1 558.3 336.4 561.0 340.7C563.7 345.0 565.4 349.4 565.5 354.0C565.6 358.6 564.6 363.2 561.9 368.0C559.2 372.8 554.2 379.2 549.4 383.0C544.5 386.8 538.0 389.2 532.8 390.5C527.6 391.8 522.6 391.7 518.0 391.0C513.4 390.3 509.4 388.4 505.0 386.5C500.6 384.6 496.3 382.2 491.3 379.7C486.3 377.2 479.7 373.9 475.0 371.7C470.3 369.5 467.3 367.7 463.1 366.4C458.9 365.1 454.2 364.1 449.8 364.0C445.4 363.9 440.8 364.4 437.0 365.5C433.2 366.6 430.4 368.6 427.0 370.5C423.6 372.4 419.9 375.0 416.6 377.2C413.3 379.4 410.1 381.9 407.0 383.5C403.9 385.1 401.5 385.9 398.0 386.5C394.5 387.1 391.2 387.6 386.1 387.2C381.0 386.8 373.0 385.1 367.5 383.8C362.0 382.6 358.0 380.9 352.9 379.7C347.8 378.5 341.8 377.2 337.1 376.8C332.5 376.4 329.4 376.1 325.0 377.0C320.6 377.9 315.5 380.2 311.0 382.0C306.5 383.8 301.9 386.0 298.1 388.0C294.3 390.0 291.9 392.1 288.2 393.8C284.5 395.5 279.9 397.6 276.0 398.0C272.1 398.4 268.1 397.7 265.0 396.0C261.9 394.3 259.3 390.5 257.5 388.0C255.7 385.5 254.7 383.5 254.0 381.0C253.3 378.5 252.8 376.5 253.3 373.0z" fill="#fff"/><g clip-path="url(#wc)"><polygon points="240,330 279.2,337.900 303.300,401.800 240,410" fill="#f2f2f2"/><polygon points="277.2,332.7 322.0,314.0 341.4,394.6 304.1,403.8" fill="#d23c5a"/><polygon points="366.8,321.8 392.5,300.7 404.6,409.7 367.7,401.5" fill="#962c48"/><polygon points="424.4,295.6 470.0,307.7 476.4,390.0 437.9,386.6" fill="#962c48"/><polygon points="513.9,300 580,300 580,400 512.4,400" fill="#962c48"/></g><path d="M253.3 373.0C253.8 369.5 255.1 363.4 257.0 360.0C258.9 356.6 261.7 354.2 265.0 352.5C268.3 350.8 272.8 350.7 277.0 349.5C281.2 348.3 285.6 347.2 290.0 345.5C294.4 343.8 298.8 341.5 303.1 339.5C307.4 337.5 311.9 334.8 316.0 333.5C320.1 332.2 323.2 331.7 328.0 331.8C332.8 331.9 339.6 333.1 344.6 334.0C349.6 334.9 353.9 336.6 358.0 337.5C362.1 338.4 365.5 339.5 369.0 339.5C372.5 339.5 375.6 339.0 379.0 337.5C382.4 336.0 386.4 332.9 389.4 330.5C392.4 328.1 394.5 325.3 397.0 323.0C399.5 320.7 401.9 318.3 404.4 316.6C406.9 314.9 409.2 313.4 412.0 312.8C414.8 312.2 417.7 312.0 421.0 312.8C424.3 313.6 427.2 315.8 432.0 317.5C436.8 319.2 444.5 321.9 449.8 323.2C455.1 324.5 460.1 325.3 464.0 325.5C467.9 325.7 470.0 325.4 473.0 324.5C476.0 323.6 478.7 321.8 482.0 320.0C485.3 318.2 489.3 315.3 493.0 313.8C496.7 312.3 500.3 311.5 504.0 311.2C507.7 310.9 510.2 310.8 515.0 311.8C519.8 312.8 527.1 314.7 532.8 317.4C538.5 320.1 544.7 324.3 549.4 328.2C554.1 332.1 558.3 336.4 561.0 340.7C563.7 345.0 565.4 349.4 565.5 354.0C565.6 358.6 564.6 363.2 561.9 368.0C559.2 372.8 554.2 379.2 549.4 383.0C544.5 386.8 538.0 389.2 532.8 390.5C527.6 391.8 522.6 391.7 518.0 391.0C513.4 390.3 509.4 388.4 505.0 386.5C500.6 384.6 496.3 382.2 491.3 379.7C486.3 377.2 479.7 373.9 475.0 371.7C470.3 369.5 467.3 367.7 463.1 366.4C458.9 365.1 454.2 364.1 449.8 364.0C445.4 363.9 440.8 364.4 437.0 365.5C433.2 366.6 430.4 368.6 427.0 370.5C423.6 372.4 419.9 375.0 416.6 377.2C413.3 379.4 410.1 381.9 407.0 383.5C403.9 385.1 401.5 385.9 398.0 386.5C394.5 387.1 391.2 387.6 386.1 387.2C381.0 386.8 373.0 385.1 367.5 383.8C362.0 382.6 358.0 380.9 352.9 379.7C347.8 378.5 341.8 377.2 337.1 376.8C332.5 376.4 329.4 376.1 325.0 377.0C320.6 377.9 315.5 380.2 311.0 382.0C306.5 383.8 301.9 386.0 298.1 388.0C294.3 390.0 291.9 392.1 288.2 393.8C284.5 395.5 279.9 397.6 276.0 398.0C272.1 398.4 268.1 397.7 265.0 396.0C261.9 394.3 259.3 390.5 257.5 388.0C255.7 385.5 254.7 383.5 254.0 381.0C253.3 378.5 252.8 376.5 253.3 373.0z" fill="none" stroke="#000" stroke-width="3.100" stroke-linejoin="round"/><path d="M283.2 348.5L298.1 388M326.3 331.9L337.1 376.7M367 339.5L367.5 383.8M395.2 324.9L401.9 385.5M427.4 315.8L434.9 366.4M471.4 326L475 371.7M513.7 311.6L512.6 389.6" stroke="#000" stroke-width="2.800" stroke-linecap="round"/><circle cx="277.700" cy="365.600" r="4" fill="#000"/><path d="M270 383c1.500 1.800 6 1.500 9-1.300" stroke="#000" stroke-width="1.300" fill="none" stroke-linecap="round"/><path d="M270 345l8 3.500" stroke="#ccc" stroke-width="1"/><circle cx="459" cy="520" r="6" fill="none" stroke="#000" stroke-width="1"/></svg>
<div class="a" style="left:643px;top:89px;width:21px;height:611px;background:#242424"></div>
<div class="a" style="left:644.500px;top:101px;width:18px;height:565px;background:linear-gradient(to right,#403e3c,#2c2b2a);border-radius:7px"></div>
<div class="a" style="left:644.500px;top:288px;width:18px;height:88px;background:linear-gradient(to right,#7c7a78,#4e4c4a);border-radius:5px"></div>
<svg class="a" style="left:645px;top:91px" width="17" height="590"><path d="M8 2l4.500 6.500h-9zM8 586l4.500-6.500h-9z" fill="#8a8a8a"/></svg>
<div class="a" style="left:214px;top:679px;width:448px;height:21px;background:#242424"></div>
<div class="a" style="left:224.500px;top:680px;width:427px;height:18px;background:linear-gradient(#403e3c,#2c2b2a);border-radius:7px"></div>
<div class="a" style="left:382.500px;top:680.500px;width:45.500px;height:17px;background:linear-gradient(#7c7a78,#54524f);border-radius:5px"></div>
<svg class="a" style="left:214px;top:680px" width="448" height="18"><path d="M2.500 9l6.500-4.500v9zM447 9l-6.500-4.500v9z" fill="#8a8a8a"/></svg>
<div class="a" style="left:241px;top:624px;width:392px;height:43.500px;background:#222;border-radius:3px"></div>
<div class="t" style="left:269.70px;top:632px;font-size:13.5px;color:#ddd;transform:scaleX(0.9542);transform-origin:0 0;">You are not using the latest version of MediBang Paint.</div>
<div class="t" style="left:249.50px;top:648px;font-size:13.5px;color:#ddd;transform:scaleX(0.9494);transform-origin:0 0;">Please install the latest version of MediBang Paint found here.</div>
<svg class="a" style="left:611px;top:639px" width="15" height="15"><rect x="1" y="1" width="13" height="13" fill="none" stroke="#eee" stroke-width="1.600"/><path d="M4.500 4.500l6 6M10.500 4.500l-6 6" stroke="#eee" stroke-width="1.800"/></svg>
<div class="a" style="left:662px;top:68px;width:362px;height:632px;background:#1c1c1c"></div>
<div class="a" style="left:664px;top:68px;width:1.500px;height:632px;background:#151515"></div>
<div class="ph" style="left:668px;top:68px;width:356px;background:#353333"></div>
<div class="t" style="left:810.00px;top:75px;font-size:11.5px;color:#ddd;transform:scaleX(0.9383);transform-origin:0 0;">Hoa tiêu</div>
<svg class="a" style="left:993.5px;top:73px" width="11" height="11"><path d="M5 2.500H1.500v7h7V6" fill="none" stroke="#ccc" stroke-width="1.200"/><path d="M5 6l4.500-4.500M6 1h4v4" fill="none" stroke="#ccc" stroke-width="1.200"/></svg>
<svg class="a" style="left:1010px;top:73.5px" width="10" height="10"><path d="M1.500 1.500l6.500 6.500M8 1.500l-6.500 6.500" stroke="#ddd" stroke-width="2.300"/></svg>
<div class="a" style="left:668px;top:89px;width:356px;height:30px;background:#1f1f1f"></div>
<div class="a" style="left:668px;top:119px;width:356px;height:217px;background:#494745"></div>
<div class="a" style="left:703px;top:120px;width:286px;height:215px;background:#f2f2f2"></div>
<div class="a" style="left:789px;top:157px;width:46px;height:63px;border:2px solid #c81010"></div>
<svg class="a" style="left:789px;top:157px" width="46" height="63" viewBox="0 0 46 63"><g transform="translate(-23.00,-10.66) scale(0.1105)"><defs><clipPath id="wc2"><path d="M253.3 373.0C253.8 369.5 255.1 363.4 257.0 360.0C258.9 356.6 261.7 354.2 265.0 352.5C268.3 350.8 272.8 350.7 277.0 349.5C281.2 348.3 285.6 347.2 290.0 345.5C294.4 343.8 298.8 341.5 303.1 339.5C307.4 337.5 311.9 334.8 316.0 333.5C320.1 332.2 323.2 331.7 328.0 331.8C332.8 331.9 339.6 333.1 344.6 334.0C349.6 334.9 353.9 336.6 358.0 337.5C362.1 338.4 365.5 339.5 369.0 339.5C372.5 339.5 375.6 339.0 379.0 337.5C382.4 336.0 386.4 332.9 389.4 330.5C392.4 328.1 394.5 325.3 397.0 323.0C399.5 320.7 401.9 318.3 404.4 316.6C406.9 314.9 409.2 313.4 412.0 312.8C414.8 312.2 417.7 312.0 421.0 312.8C424.3 313.6 427.2 315.8 432.0 317.5C436.8 319.2 444.5 321.9 449.8 323.2C455.1 324.5 460.1 325.3 464.0 325.5C467.9 325.7 470.0 325.4 473.0 324.5C476.0 323.6 478.7 321.8 482.0 320.0C485.3 318.2 489.3 315.3 493.0 313.8C496.7 312.3 500.3 311.5 504.0 311.2C507.7 310.9 510.2 310.8 515.0 311.8C519.8 312.8 527.1 314.7 532.8 317.4C538.5 320.1 544.7 324.3 549.4 328.2C554.1 332.1 558.3 336.4 561.0 340.7C563.7 345.0 565.4 349.4 565.5 354.0C565.6 358.6 564.6 363.2 561.9 368.0C559.2 372.8 554.2 379.2 549.4 383.0C544.5 386.8 538.0 389.2 532.8 390.5C527.6 391.8 522.6 391.7 518.0 391.0C513.4 390.3 509.4 388.4 505.0 386.5C500.6 384.6 496.3 382.2 491.3 379.7C486.3 377.2 479.7 373.9 475.0 371.7C470.3 369.5 467.3 367.7 463.1 366.4C458.9 365.1 454.2 364.1 449.8 364.0C445.4 363.9 440.8 364.4 437.0 365.5C433.2 366.6 430.4 368.6 427.0 370.5C423.6 372.4 419.9 375.0 416.6 377.2C413.3 379.4 410.1 381.9 407.0 383.5C403.9 385.1 401.5 385.9 398.0 386.5C394.5 387.1 391.2 387.6 386.1 387.2C381.0 386.8 373.0 385.1 367.5 383.8C362.0 382.6 358.0 380.9 352.9 379.7C347.8 378.5 341.8 377.2 337.1 376.8C332.5 376.4 329.4 376.1 325.0 377.0C320.6 377.9 315.5 380.2 311.0 382.0C306.5 383.8 301.9 386.0 298.1 388.0C294.3 390.0 291.9 392.1 288.2 393.8C284.5 395.5 279.9 397.6 276.0 398.0C272.1 398.4 268.1 397.7 265.0 396.0C261.9 394.3 259.3 390.5 257.5 388.0C255.7 385.5 254.7 383.5 254.0 381.0C253.3 378.5 252.8 376.5 253.3 373.0z"/></clipPath></defs><path d="M253.3 373.0C253.8 369.5 255.1 363.4 257.0 360.0C258.9 356.6 261.7 354.2 265.0 352.5C268.3 350.8 272.8 350.7 277.0 349.5C281.2 348.3 285.6 347.2 290.0 345.5C294.4 343.8 298.8 341.5 303.1 339.5C307.4 337.5 311.9 334.8 316.0 333.5C320.1 332.2 323.2 331.7 328.0 331.8C332.8 331.9 339.6 333.1 344.6 334.0C349.6 334.9 353.9 336.6 358.0 337.5C362.1 338.4 365.5 339.5 369.0 339.5C372.5 339.5 375.6 339.0 379.0 337.5C382.4 336.0 386.4 332.9 389.4 330.5C392.4 328.1 394.5 325.3 397.0 323.0C399.5 320.7 401.9 318.3 404.4 316.6C406.9 314.9 409.2 313.4 412.0 312.8C414.8 312.2 417.7 312.0 421.0 312.8C424.3 313.6 427.2 315.8 432.0 317.5C436.8 319.2 444.5 321.9 449.8 323.2C455.1 324.5 460.1 325.3 464.0 325.5C467.9 325.7 470.0 325.4 473.0 324.5C476.0 323.6 478.7 321.8 482.0 320.0C485.3 318.2 489.3 315.3 493.0 313.8C496.7 312.3 500.3 311.5 504.0 311.2C507.7 310.9 510.2 310.8 515.0 311.8C519.8 312.8 527.1 314.7 532.8 317.4C538.5 320.1 544.7 324.3 549.4 328.2C554.1 332.1 558.3 336.4 561.0 340.7C563.7 345.0 565.4 349.4 565.5 354.0C565.6 358.6 564.6 363.2 561.9 368.0C559.2 372.8 554.2 379.2 549.4 383.0C544.5 386.8 538.0 389.2 532.8 390.5C527.6 391.8 522.6 391.7 518.0 391.0C513.4 390.3 509.4 388.4 505.0 386.5C500.6 384.6 496.3 382.2 491.3 379.7C486.3 377.2 479.7 373.9 475.0 371.7C470.3 369.5 467.3 367.7 463.1 366.4C458.9 365.1 454.2 364.1 449.8 364.0C445.4 363.9 440.8 364.4 437.0 365.5C433.2 366.6 430.4 368.6 427.0 370.5C423.6 372.4 419.9 375.0 416.6 377.2C413.3 379.4 410.1 381.9 407.0 383.5C403.9 385.1 401.5 385.9 398.0 386.5C394.5 387.1 391.2 387.6 386.1 387.2C381.0 386.8 373.0 385.1 367.5 383.8C362.0 382.6 358.0 380.9 352.9 379.7C347.8 378.5 341.8 377.2 337.1 376.8C332.5 376.4 329.4 376.1 325.0 377.0C320.6 377.9 315.5 380.2 311.0 382.0C306.5 383.8 301.9 386.0 298.1 388.0C294.3 390.0 291.9 392.1 288.2 393.8C284.5 395.5 279.9 397.6 276.0 398.0C272.1 398.4 268.1 397.7 265.0 396.0C261.9 394.3 259.3 390.5 257.5 388.0C255.7 385.5 254.7 383.5 254.0 381.0C253.3 378.5 252.8 376.5 253.3 373.0z" fill="#fff"/><g clip-path="url(#wc2)"><polygon points="277.2,332.7 322.0,314.0 341.4,394.6 304.1,403.8" fill="#c83858"/><polygon points="366.8,321.8 392.5,300.7 404.6,409.7 367.7,401.5" fill="#962c48"/><polygon points="424.4,295.6 470.0,307.7 476.4,390.0 437.9,386.6" fill="#962c48"/><polygon points="513.9,300 580,300 580,400 512.400,400" fill="#962c48"/></g><path d="M253.3 373.0C253.8 369.5 255.1 363.4 257.0 360.0C258.9 356.6 261.7 354.2 265.0 352.5C268.3 350.8 272.8 350.7 277.0 349.5C281.2 348.3 285.6 347.2 290.0 345.5C294.4 343.8 298.8 341.5 303.1 339.5C307.4 337.5 311.9 334.8 316.0 333.5C320.1 332.2 323.2 331.7 328.0 331.8C332.8 331.9 339.6 333.1 344.6 334.0C349.6 334.9 353.9 336.6 358.0 337.5C362.1 338.4 365.5 339.5 369.0 339.5C372.5 339.5 375.6 339.0 379.0 337.5C382.4 336.0 386.4 332.9 389.4 330.5C392.4 328.1 394.5 325.3 397.0 323.0C399.5 320.7 401.9 318.3 404.4 316.6C406.9 314.9 409.2 313.4 412.0 312.8C414.8 312.2 417.7 312.0 421.0 312.8C424.3 313.6 427.2 315.8 432.0 317.5C436.8 319.2 444.5 321.9 449.8 323.2C455.1 324.5 460.1 325.3 464.0 325.5C467.9 325.7 470.0 325.4 473.0 324.5C476.0 323.6 478.7 321.8 482.0 320.0C485.3 318.2 489.3 315.3 493.0 313.8C496.7 312.3 500.3 311.5 504.0 311.2C507.7 310.9 510.2 310.8 515.0 311.8C519.8 312.8 527.1 314.7 532.8 317.4C538.5 320.1 544.7 324.3 549.4 328.2C554.1 332.1 558.3 336.4 561.0 340.7C563.7 345.0 565.4 349.4 565.5 354.0C565.6 358.6 564.6 363.2 561.9 368.0C559.2 372.8 554.2 379.2 549.4 383.0C544.5 386.8 538.0 389.2 532.8 390.5C527.6 391.8 522.6 391.7 518.0 391.0C513.4 390.3 509.4 388.4 505.0 386.5C500.6 384.6 496.3 382.2 491.3 379.7C486.3 377.2 479.7 373.9 475.0 371.7C470.3 369.5 467.3 367.7 463.1 366.4C458.9 365.1 454.2 364.1 449.8 364.0C445.4 363.9 440.8 364.4 437.0 365.5C433.2 366.6 430.4 368.6 427.0 370.5C423.6 372.4 419.9 375.0 416.6 377.2C413.3 379.4 410.1 381.9 407.0 383.5C403.9 385.1 401.5 385.9 398.0 386.5C394.5 387.1 391.2 387.6 386.1 387.2C381.0 386.8 373.0 385.1 367.5 383.8C362.0 382.6 358.0 380.9 352.9 379.7C347.8 378.5 341.8 377.2 337.1 376.8C332.5 376.4 329.4 376.1 325.0 377.0C320.6 377.9 315.5 380.2 311.0 382.0C306.5 383.8 301.9 386.0 298.1 388.0C294.3 390.0 291.9 392.1 288.2 393.8C284.5 395.5 279.9 397.6 276.0 398.0C272.1 398.4 268.1 397.7 265.0 396.0C261.9 394.3 259.3 390.5 257.5 388.0C255.7 385.5 254.7 383.5 254.0 381.0C253.3 378.5 252.8 376.5 253.3 373.0z" fill="none" stroke="#702038" stroke-width="7"/></g></svg>
<div class="btn" style="left:672px;top:93px;width:23px;height:23px;"><svg width="23" height="23" viewBox="0 0 23 23" style="left:-1px;top:-1px"><circle cx="10" cy="10" r="4.500" fill="none" stroke="#e4e4e4" stroke-width="1.700"/><path d="M13.500 13.500l4 4" stroke="#e4e4e4" stroke-width="2.400" stroke-linecap="round"/><path d="M9 8.500l1.300-1v5" stroke="#eee" stroke-width="1.200" fill="none"/></svg></div>
<div class="btn" style="left:706px;top:93px;width:23px;height:23px;"><svg width="23" height="23" viewBox="0 0 23 23" style="left:-1px;top:-1px"><circle cx="10" cy="10" r="4.500" fill="none" stroke="#e4e4e4" stroke-width="1.700"/><path d="M13.500 13.500l4 4" stroke="#e4e4e4" stroke-width="2.400" stroke-linecap="round"/><path d="M7.500 10h5M10 7.500v5" stroke="#eee" stroke-width="1.400"/></svg></div>
<div class="btn" style="left:733px;top:93px;width:23px;height:23px;"><svg width="23" height="23" viewBox="0 0 23 23" style="left:-1px;top:-1px"><rect x="5.500" y="5.500" width="12" height="12" fill="none" stroke="#eee" stroke-width="1.200" stroke-dasharray="2 1"/><path d="M7.500 7.500l8 8M15.500 7.500l-8 8" stroke="#eee" stroke-width="1"/><path d="M7 7h2.500L7 9.500zM16 7v2.500L13.500 7zM7 16h2.500L7 13.500zM16 16h-2.500L16 13.500z" fill="#eee"/></svg></div>
<div class="btn" style="left:760px;top:93px;width:23px;height:23px;"><svg width="23" height="23" viewBox="0 0 23 23" style="left:-1px;top:-1px"><circle cx="10" cy="10" r="4.500" fill="none" stroke="#e4e4e4" stroke-width="1.700"/><path d="M13.500 13.500l4 4" stroke="#e4e4e4" stroke-width="2.400" stroke-linecap="round"/><path d="M7.500 10h5" stroke="#eee" stroke-width="1.400"/></svg></div>
<div class="btn" style="left:794px;top:93px;width:23px;height:23px;"><svg width="23" height="23" viewBox="0 0 23 23" style="left:-1px;top:-1px"><path d="M11.500 4.500a7 7 0 1 1-6.500 4.400" fill="none" stroke="#eee" stroke-width="1.800"/><path d="M11.500 2v5.500l-4.500-2.700z" fill="#eee"/><rect x="8.500" y="9" width="6" height="5" fill="none" stroke="#eee" stroke-width="1.200" transform="rotate(-20 11.500 11.500)"/></svg></div>
<div class="btn" style="left:821px;top:93px;width:23px;height:23px;background:#1f1f1f;border-color:#484848"><svg width="23" height="23" viewBox="0 0 23 23" style="left:-1px;top:-1px"><rect x="7" y="8" width="9" height="7" fill="#fff"/><path d="M4.500 8V4.500H8M15 4.500h3.500V8M18.500 15v3.500H15M8 18.500H4.500V15" fill="none" stroke="#eee" stroke-width="1.800"/></svg></div>
<div class="btn" style="left:848px;top:93px;width:23px;height:23px;"><svg width="23" height="23" viewBox="0 0 23 23" style="left:-1px;top:-1px"><path d="M11.500 4.500a7 7 0 1 0 6.500 4.400" fill="none" stroke="#eee" stroke-width="1.800"/><path d="M11.500 2v5.500l4.500-2.700z" fill="#eee"/><rect x="8.500" y="9" width="6" height="5" fill="#eee" stroke="#eee" stroke-width="1.200" transform="rotate(20 11.500 11.500)"/></svg></div>
<div class="btn" style="left:882px;top:93px;width:23px;height:23px;"><svg width="23" height="23" viewBox="0 0 23 23" style="left:-1px;top:-1px"><rect x="5" y="10" width="5" height="8" fill="#eee"/><rect x="13.500" y="10.500" width="4" height="7" fill="none" stroke="#eee" stroke-width="1.200"/><path d="M11.500 8v11" stroke="#eee" stroke-width=".800"/><path d="M6.500 8.500c1-4 8-5 10-1" fill="none" stroke="#eee" stroke-width="1.500"/><path d="M17.500 4.500v4h-3.500z" fill="#eee"/></svg></div>
<div class="a" style="left:700px;top:99px;width:1px;height:12px;background:#555"></div>
<div class="a" style="left:788px;top:99px;width:1px;height:12px;background:#555"></div>
<div class="a" style="left:876px;top:99px;width:1px;height:12px;background:#555"></div>
<div class="a" style="left:668px;top:336px;width:356px;height:5px;background:#1c1c1c"></div>
<div class="a" style="left:668px;top:341px;width:356px;height:218px;background:#262626"></div>
<div class="ph" style="left:668px;top:340px;width:356px;background:#353333"></div>
<div class="t" style="left:822.80px;top:347px;font-size:11.5px;color:#ddd;transform:scaleX(0.8209);transform-origin:0 0;">Lớp</div>
<svg class="a" style="left:993.5px;top:345px" width="11" height="11"><path d="M5 2.500H1.500v7h7V6" fill="none" stroke="#ccc" stroke-width="1.200"/><path d="M5 6l4.500-4.500M6 1h4v4" fill="none" stroke="#ccc" stroke-width="1.200"/></svg>
<svg class="a" style="left:1010px;top:345.5px" width="10" height="10"><path d="M1.500 1.500l6.500 6.500M8 1.500l-6.500 6.500" stroke="#ddd" stroke-width="2.300"/></svg>
<div class="t" style="left:673.50px;top:370px;font-size:12px;color:#ddd;transform:scaleX(0.9276);transform-origin:0 0;">Độ trong</div>
<div class="a" style="left:763.500px;top:367.500px;width:207.500px;height:15px;background:linear-gradient(to right,#7cc0f4,#4f98d4)"></div>
<div class="t" style="left:977.50px;top:371px;font-size:11.5px;color:#ddd;transform:scaleX(0.9476);transform-origin:0 0;">100 %</div>
<div class="t" style="left:673.50px;top:395px;font-size:12px;color:#ddd;transform:scaleX(0.8926);transform-origin:0 0;">Pha trộn</div>
<div class="a" style="left:765px;top:390px;width:252px;height:21px;background:#444;border-radius:3px"></div>
<div class="t" style="left:767.40px;top:396px;font-size:11.5px;color:#ddd;transform:scaleX(0.8979);transform-origin:0 0;">Bình thường</div>
<svg class="a" style="left:1005px;top:398px" width="8" height="5"><path d="M0 0h8l-4 4.500z" fill="#999"/></svg>
<div class="chk" style="left:677px;top:421px;background:#262626"></div>
<div class="t" style="left:693.00px;top:421px;font-size:12px;color:#ddd;transform:scaleX(0.8892);transform-origin:0 0;">Bảo vệ alpha</div>
<div class="chk" style="left:793px;top:421px;background:#262626"></div>
<div class="t" style="left:810.40px;top:421px;font-size:12px;color:#ddd;transform:scaleX(0.8764);transform-origin:0 0;">Xén bớt</div>
<div class="chk" style="left:909px;top:421px;background:#262626"></div>
<div class="t" style="left:925.90px;top:421px;font-size:12px;color:#ddd;transform:scaleX(0.8598);transform-origin:0 0;">Khóa</div>
<div class="a" style="left:671px;top:441px;width:330px;height:39px;background:#585858"></div>
<div class="a" style="left:690px;top:441px;width:311px;height:39px;background:#4f9ad8"></div>
<div class="a" style="left:676px;top:455px;width:10px;height:10px;border-radius:50%;background:#ccc"></div>
<div class="a" style="left:704px;top:447px;width:36px;height:26px;border:1px solid #ccc;background-color:#fff;background-image:conic-gradient(#ddd 25%,#fff 0 50%,#ddd 0 75%,#fff 0);background-size:8px 8px"></div>
<div class="t" style="left:756.00px;top:454px;font-size:13px;color:#fff;font-weight:bold;transform:scaleX(0.9580);transform-origin:0 0;">Lớp2</div>
<div class="a" style="left:671px;top:481px;width:330px;height:39px;background:#585858"></div>
<div class="a" style="left:676px;top:495px;width:10px;height:10px;border-radius:50%;background:#ccc"></div>
<div class="a" style="left:704px;top:487px;width:36px;height:26px;border:1px solid #ccc;background-color:#fff;background-image:conic-gradient(#ddd 25%,#fff 0 50%,#ddd 0 75%,#fff 0);background-size:8px 8px"></div>
<div class="t" style="left:756.00px;top:494px;font-size:13px;color:#fff;transform:scaleX(0.8802);transform-origin:0 0;">Lớp1</div>
<svg class="a" style="left:979px;top:451px" width="20" height="20" viewBox="0 0 20 20"><polygon points="19.38,8.51 19.38,11.49 16.32,11.52 15.54,13.40 17.69,15.58 15.58,17.69 13.40,15.54 11.52,16.32 11.49,19.38 8.51,19.38 8.48,16.32 6.60,15.54 4.42,17.69 2.31,15.58 4.46,13.40 3.68,11.52 0.62,11.49 0.62,8.51 3.68,8.48 4.46,6.60 2.31,4.42 4.42,2.31 6.60,4.46 8.48,3.68 8.51,0.62 11.49,0.62 11.52,3.68 13.40,4.46 15.58,2.31 17.69,4.42 15.54,6.60 16.32,8.48" fill="#fff"/><circle cx="10" cy="10" r="2.6" fill="#4f9ad8"/></svg>
<div class="t" style="left:980.00px;top:507px;font-size:9px;color:#fff;transform:scaleX(0.9969);transform-origin:0 0;">8</div>
<div class="a" style="left:987px;top:505px;width:12px;height:12px;background:#000;border:1px solid #888"></div>
<div class="a" style="left:671px;top:520.500px;width:330px;height:4.500px;background:#565656"></div>
<div class="a" style="left:1003px;top:441px;width:19px;height:83px;background:#2c2c2c"></div>
<div class="a" style="left:1003px;top:451.500px;width:19px;height:61.500px;background:linear-gradient(to right,#7c7a78,#54524f);border-radius:5px"></div>
<svg class="a" style="left:1003px;top:441px" width="19" height="83"><path d="M9.500 2l4 6h-8zM9.500 81l4-6h-8z" fill="#888"/></svg>
<div class="a" style="left:671px;top:525.500px;width:351px;height:30px;border:1px solid #333;background:#222"></div>
<div class="btn" style="left:674px;top:529px;width:23px;height:23px;"><svg width="23" height="23" viewBox="0 0 23 23" style="left:-1px;top:-1px"><path d="M5.900 5.100h7.400l3.800 3.800v8.500h-11.200z" fill="none" stroke="#ddd" stroke-width="1.400"/><path d="M13.300 5.100v3.800h3.800z" fill="#ddd"/></svg></div>
<div class="btn" style="left:701px;top:529px;width:23px;height:23px;"><svg width="23" height="23" viewBox="0 0 23 23" style="left:-1px;top:-1px"><path d="M5.900 5.100h7.400l3.800 3.800v8.500h-11.200z" fill="none" stroke="#ddd" stroke-width="1.400"/></svg></div>
<div class="btn" style="left:728px;top:529px;width:23px;height:23px;"><svg width="23" height="23" viewBox="0 0 23 23" style="left:-1px;top:-1px"><path d="M5.900 5.100h7.400l3.800 3.800v8.500h-11.200z" fill="none" stroke="#ddd" stroke-width="1.400"/></svg></div>
<div class="btn" style="left:755px;top:529px;width:30px;height:23px;"><svg width="30" height="23" viewBox="0 0 30 23" style="left:-1px;top:-1px"><path d="M4.500 4.500h6.500l3.500 3.500v4M9 18.500h-4.500v-14" fill="none" stroke="#ddd" stroke-width="1.300"/><path d="M10 15.500h6M13 12.500v6" stroke="#eee" stroke-width="1.600"/><path d="M19 10.500h7l-3.500 4z" fill="#eee"/></svg></div>
<div class="btn" style="left:789px;top:529px;width:23px;height:23px;"><svg width="23" height="23" viewBox="0 0 23 23" style="left:-1px;top:-1px"><path d="M4 7.500h5.500l1.500 2h8.500v9H4z" fill="#e8e8e8"/><path d="M4 6h5.500l1.500 1.500H4z" fill="#e8e8e8"/></svg></div>
<div class="btn" style="left:823px;top:529px;width:23px;height:23px;"><svg width="23" height="23" viewBox="0 0 23 23" style="left:-1px;top:-1px"><rect x="5" y="8" width="10" height="10" fill="none" stroke="#ddd" stroke-width="1.300"/><path d="M8 8V5h10v10h-3" fill="none" stroke="#ddd" stroke-width="1.300"/></svg></div>
<div class="btn" style="left:850px;top:529px;width:23px;height:23px;background:#1f1f1f;border-color:#484848"><svg width="23" height="23" viewBox="0 0 23 23" style="left:-1px;top:-1px"><rect x="4.500" y="4.500" width="5" height="4" fill="none" stroke="#eee" stroke-width="1.200"/><rect x="4.500" y="14" width="5" height="4" fill="#eee"/><rect x="13.500" y="8.500" width="6" height="6" fill="#eee"/><path d="M7 8.500v5.500M7 11.500h6" stroke="#eee" stroke-width="1.200"/></svg></div>
<div class="btn" style="left:884px;top:529px;width:23px;height:23px;"><svg width="23" height="23" viewBox="0 0 23 23" style="left:-1px;top:-1px"><path d="M4.300 6.700h14.400M8.700 6V4.500h5.600V6" stroke="#eee" stroke-width="1.600" fill="none"/><path d="M5.500 8.300h12l-.8 10.500h-10.400z" fill="#eee"/><path d="M8.800 10v7.300M11.500 10v7.300M14.200 10v7.300" stroke="#444" stroke-width="1.200"/></svg></div>
<div class="t" style="left:709.30px;top:537px;font-size:9.5px;color:#eee;font-weight:bold;transform:scaleX(0.8873);transform-origin:0 0;">8</div>
<div class="t" style="left:737.00px;top:537px;font-size:9.5px;color:#eee;font-weight:bold;transform:scaleX(0.7552);transform-origin:0 0;">1</div>
<div class="a" style="left:818px;top:535px;width:1px;height:12px;background:#555"></div>
<div class="a" style="left:878px;top:535px;width:1px;height:12px;background:#555"></div>
<div class="a" style="left:668px;top:559px;width:356px;height:4px;background:#1c1c1c"></div>
<div class="ph" style="left:668px;top:563px;width:356px;background:#353333"></div>
<div class="t" style="left:806.50px;top:570px;font-size:11.5px;color:#ddd;transform:scaleX(0.8686);transform-origin:0 0;">Brush Size</div>
<svg class="a" style="left:993.5px;top:568px" width="11" height="11"><path d="M5 2.500H1.500v7h7V6" fill="none" stroke="#ccc" stroke-width="1.200"/><path d="M5 6l4.500-4.500M6 1h4v4" fill="none" stroke="#ccc" stroke-width="1.200"/></svg>
<svg class="a" style="left:1010px;top:568.5px" width="10" height="10"><path d="M1.500 1.500l6.500 6.500M8 1.500l-6.500 6.500" stroke="#ddd" stroke-width="2.300"/></svg>
<div class="a" style="left:668px;top:584px;width:336px;height:116px;background:#4a4846"></div>
<div class="a" style="left:668px;top:584px;width:335px;height:116px;overflow:hidden">
<div class="a" style="left:1px;top:1.0px;width:39px;height:48px;background:#585858"></div>
<div class="a" style="left:19.7px;top:19.7px;width:1.6px;height:1.6px;border-radius:50%;background:#686868"></div>
<div class="t" style="left:17.85px;top:39px;font-size:9.5px;color:#fff;">1</div>
<div class="a" style="left:41px;top:1.0px;width:39px;height:48px;background:#585858"></div>
<div class="a" style="left:59.7px;top:19.7px;width:1.6px;height:1.6px;border-radius:50%;background:#8a8a8a"></div>
<div class="t" style="left:53.89px;top:39px;font-size:9.5px;color:#fff;">1.5</div>
<div class="a" style="left:81px;top:1.0px;width:39px;height:48px;background:#585858"></div>
<div class="a" style="left:99.5px;top:19.5px;width:2.0px;height:2.0px;border-radius:50%;background:#f4f4f4"></div>
<div class="t" style="left:97.85px;top:39px;font-size:9.5px;color:#fff;">2</div>
<div class="a" style="left:121px;top:1.0px;width:39px;height:48px;background:#585858"></div>
<div class="a" style="left:139.1px;top:19.1px;width:2.8px;height:2.8px;border-radius:50%;background:#f4f4f4"></div>
<div class="t" style="left:137.85px;top:39px;font-size:9.5px;color:#fff;">3</div>
<div class="a" style="left:161px;top:1.0px;width:39px;height:48px;background:#585858"></div>
<div class="a" style="left:178.5px;top:18.5px;width:4.0px;height:4.0px;border-radius:50%;background:#f4f4f4"></div>
<div class="t" style="left:177.85px;top:39px;font-size:9.5px;color:#fff;">4</div>
<div class="a" style="left:201px;top:1.0px;width:39px;height:48px;background:#585858"></div>
<div class="a" style="left:218.1px;top:18.1px;width:4.8px;height:4.8px;border-radius:50%;background:#f4f4f4"></div>
<div class="t" style="left:217.85px;top:39px;font-size:9.5px;color:#fff;">5</div>
<div class="a" style="left:241px;top:1.0px;width:39px;height:48px;background:#585858"></div>
<div class="a" style="left:257.1px;top:17.1px;width:6.8px;height:6.8px;border-radius:50%;background:#f4f4f4"></div>
<div class="t" style="left:257.85px;top:39px;font-size:9.5px;color:#fff;">7</div>
<div class="a" style="left:281px;top:1.0px;width:39px;height:48px;background:#585858"></div>
<div class="a" style="left:295.5px;top:15.5px;width:10px;height:10px;border-radius:50%;background:#f4f4f4"></div>
<div class="t" style="left:295.21px;top:39px;font-size:9.5px;color:#fff;">10</div>
<div class="a" style="left:1px;top:50.7px;width:39px;height:48px;background:#585858"></div>
<div class="a" style="left:14.5px;top:64.2px;width:12px;height:12px;border-radius:50%;background:#f4f4f4"></div>
<div class="t" style="left:15.21px;top:89px;font-size:9.5px;color:#fff;">12</div>
<div class="a" style="left:41px;top:50.7px;width:39px;height:48px;background:#585858"></div>
<div class="a" style="left:53.0px;top:62.7px;width:15.0px;height:15.0px;border-radius:50%;background:#f4f4f4"></div>
<div class="t" style="left:55.21px;top:89px;font-size:9.5px;color:#fff;">15</div>
<div class="a" style="left:81px;top:50.7px;width:39px;height:48px;background:#585858"></div>
<div class="a" style="left:90.5px;top:60.2px;width:20px;height:20px;border-radius:50%;background:#f4f4f4"></div>
<div class="t" style="left:95.21px;top:89px;font-size:9.5px;color:#fff;">20</div>
<div class="a" style="left:121px;top:50.7px;width:39px;height:48px;background:#585858"></div>
<div class="a" style="left:128.5px;top:58.2px;width:24px;height:24px;border-radius:50%;background:#f4f4f4"></div>
<div class="t" style="left:135.21px;top:89px;font-size:9.5px;color:#fff;">25</div>
<div class="a" style="left:161px;top:50.7px;width:39px;height:48px;background:#585858"></div>
<div class="a" style="left:168.5px;top:58.2px;width:24px;height:24px;border-radius:50%;background:#f4f4f4"></div>
<div class="t" style="left:175.21px;top:89px;font-size:9.5px;color:#fff;">30</div>
<div class="a" style="left:201px;top:50.7px;width:39px;height:48px;background:#585858"></div>
<div class="a" style="left:208.5px;top:58.2px;width:24px;height:24px;border-radius:50%;background:#f4f4f4"></div>
<div class="t" style="left:215.21px;top:89px;font-size:9.5px;color:#fff;">40</div>
<div class="a" style="left:241px;top:50.7px;width:39px;height:48px;background:#585858"></div>
<div class="a" style="left:248.5px;top:58.2px;width:24px;height:24px;border-radius:50%;background:#f4f4f4"></div>
<div class="t" style="left:255.21px;top:89px;font-size:9.5px;color:#fff;">50</div>
<div class="a" style="left:281px;top:50.7px;width:39px;height:48px;background:#585858"></div>
<div class="a" style="left:288.5px;top:58.2px;width:24px;height:24px;border-radius:50%;background:#f4f4f4"></div>
<div class="t" style="left:295.21px;top:89px;font-size:9.5px;color:#fff;">70</div>
<div class="a" style="left:1px;top:100.4px;width:39px;height:48px;background:#585858"></div>
<div class="a" style="left:8.5px;top:107.9px;width:24px;height:24px;border-radius:50%;background:#f4f4f4"></div>
<div class="t" style="left:12.57px;top:138px;font-size:9.5px;color:#fff;">100</div>
<div class="a" style="left:41px;top:100.4px;width:39px;height:48px;background:#585858"></div>
<div class="a" style="left:48.5px;top:107.9px;width:24px;height:24px;border-radius:50%;background:#f4f4f4"></div>
<div class="t" style="left:52.57px;top:138px;font-size:9.5px;color:#fff;">150</div>
<div class="a" style="left:81px;top:100.4px;width:39px;height:48px;background:#585858"></div>
<div class="a" style="left:88.5px;top:107.9px;width:24px;height:24px;border-radius:50%;background:#f4f4f4"></div>
<div class="t" style="left:92.57px;top:138px;font-size:9.5px;color:#fff;">200</div>
<div class="a" style="left:121px;top:100.4px;width:39px;height:48px;background:#585858"></div>
<div class="a" style="left:128.5px;top:107.9px;width:24px;height:24px;border-radius:50%;background:#f4f4f4"></div>
<div class="t" style="left:132.57px;top:138px;font-size:9.5px;color:#fff;">300</div>
<div class="a" style="left:161px;top:100.4px;width:39px;height:48px;background:#585858"></div>
<div class="a" style="left:168.5px;top:107.9px;width:24px;height:24px;border-radius:50%;background:#f4f4f4"></div>
<div class="t" style="left:172.57px;top:138px;font-size:9.5px;color:#fff;">400</div>
<div class="a" style="left:201px;top:100.4px;width:39px;height:48px;background:#585858"></div>
<div class="a" style="left:208.5px;top:107.9px;width:24px;height:24px;border-radius:50%;background:#f4f4f4"></div>
<div class="t" style="left:212.57px;top:138px;font-size:9.5px;color:#fff;">500</div>
<div class="a" style="left:241px;top:100.4px;width:39px;height:48px;background:#585858"></div>
<div class="a" style="left:248.5px;top:107.9px;width:24px;height:24px;border-radius:50%;background:#f4f4f4"></div>
<div class="t" style="left:252.57px;top:138px;font-size:9.5px;color:#fff;">700</div>
<div class="a" style="left:281px;top:100.4px;width:39px;height:48px;background:#585858"></div>
<div class="a" style="left:288.5px;top:107.9px;width:24px;height:24px;border-radius:50%;background:#f4f4f4"></div>
<div class="t" style="left:289.93px;top:138px;font-size:9.5px;color:#fff;">1000</div>
</div>
<div class="a" style="left:1003.500px;top:584px;width:20.500px;height:116px;background:#262524"></div>
<div class="a" style="left:1004.500px;top:594px;width:18.500px;height:95px;background:linear-gradient(to right,#403e3c,#2c2b2a);border-radius:7px"></div>
<div class="a" style="left:1005px;top:596.500px;width:18px;height:70.500px;background:linear-gradient(to right,#7c7a78,#54524f);border-radius:5px"></div>
<svg class="a" style="left:1004.500px;top:584px" width="19" height="116"><path d="M9.500 2l4 6h-8zM9.500 114l4-6h-8z" fill="#8a8a8a"/></svg>
<div class="t" style="left:748.20px;top:643px;font-size:21px;color:rgba(215,215,215,.5);transform:scaleX(0.9479);transform-origin:0 0;">Activate Windows</div>
<div class="t" style="left:748.20px;top:670px;font-size:14.5px;color:rgba(215,215,215,.5);transform:scaleX(1.0311);transform-origin:0 0;">Go to Settings to activate Windows.</div>
<div class="a" style="left:0;top:700px;width:1024px;height:20px;background:#222"></div>
<div class="t" style="left:6.30px;top:705px;font-size:11.5px;color:#ddd;transform:scaleX(0.9620);transform-origin:0 0;">16000 * 11998 pixel</div>
<div class="t" style="left:113.70px;top:705px;font-size:11.5px;color:#ddd;transform:scaleX(0.9813);transform-origin:0 0;">(116.1 * 87.1cm)</div>
<div class="t" style="left:206.30px;top:705px;font-size:11.5px;color:#ddd;transform:scaleX(0.9911);transform-origin:0 0;">350 dpi</div>
<div class="t" style="left:253.60px;top:705px;font-size:11.5px;color:#ddd;transform:scaleX(0.9421);transform-origin:0 0;">16 %</div>
<div class="t" style="left:287.30px;top:705px;font-size:11.5px;color:#ddd;transform:scaleX(0.9412);transform-origin:0 0;">( 7287, 5229 )</div>
</div></body></html>
